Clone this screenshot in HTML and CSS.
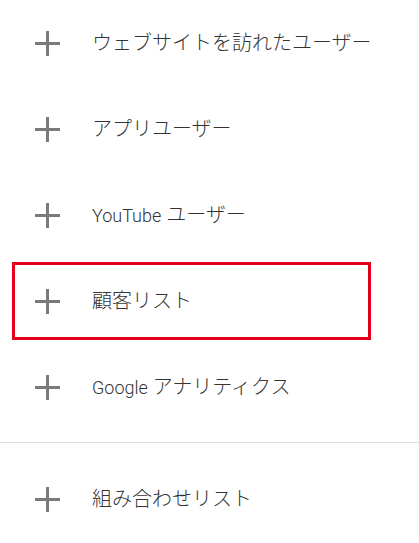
FILE: index.html
```html
<!DOCTYPE html>
<html lang="ja">
<head>
<meta charset="utf-8">
<link rel="stylesheet" href="styles.css">
</head>
<body>
<div class="menu">
  <div class="group group-top">
    <div class="row"><span class="plus"></span><span class="label">ウェブサイトを訪れたユーザー</span></div>
    <div class="row"><span class="plus"></span><span class="label">アプリユーザー</span></div>
    <div class="row"><span class="plus"></span><span class="label"><span class="latin">YouTube</span> ユーザー</span></div>
    <div class="row row-highlight"><span class="plus"></span><span class="label">顧客リスト</span></div>
    <div class="row"><span class="plus"></span><span class="label"><span class="latin">Google</span> アナリティクス</span></div>
  </div>
  <div class="group group-bottom">
    <div class="row"><span class="plus"></span><span class="label">組み合わせリスト</span></div>
  </div>
</div>
</body>
</html>
```
FILE: styles.css
```css
html, body {
  margin: 0;
  padding: 0;
  background: #ffffff;
}
.menu {
  width: 419px;
  font-family: Roboto, "Noto Sans CJK JP", sans-serif;
  font-weight: 300;
  color: #333333;
}
.group-top {
  padding-bottom: 12px;
  border-bottom: 1px solid #dedede;
}
.group-bottom {
  padding-top: 13px;
}
.row {
  position: relative;
  height: 86px;
  display: flex;
  align-items: center;
  padding-left: 35px;
  gap: 32px;
}
.plus {
  position: relative;
  width: 25px;
  height: 25px;
  flex: none;
}
.plus::before,
.plus::after {
  content: "";
  position: absolute;
  background: #7a7a7a;
}
.plus::before {
  left: 0;
  right: 0;
  top: 11px;
  height: 3px;
}
.plus::after {
  top: 0;
  bottom: 0;
  left: 11px;
  width: 3px;
}
.label {
  font-size: 20px;
  line-height: 1;
}
.latin {
  font-size: 18px;
}
.row-highlight::before {
  content: "";
  position: absolute;
  left: 12px;
  top: 4px;
  width: 353px;
  bottom: 4px;
  border: 3px solid #e3001b;
}
```
